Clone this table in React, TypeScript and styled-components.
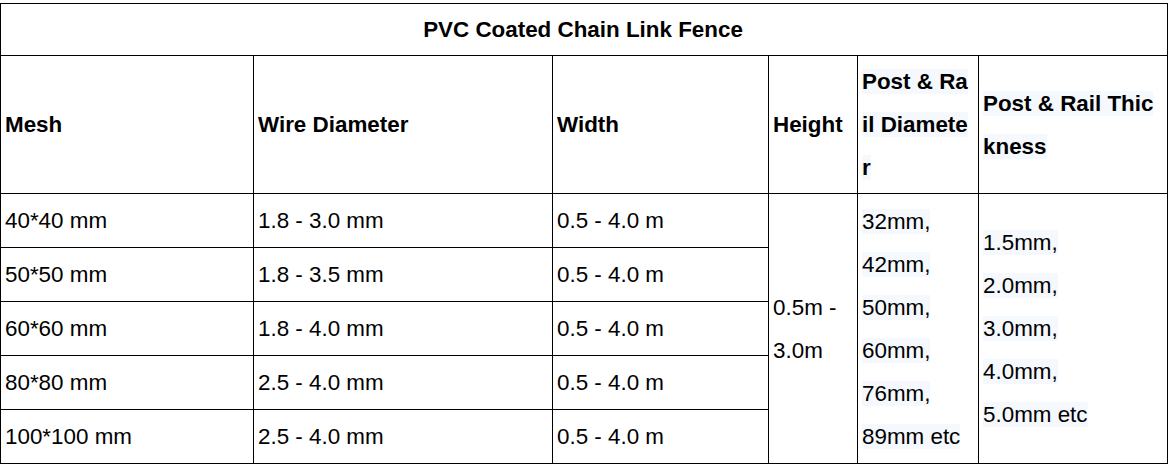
import React from 'react';
import styled, { createGlobalStyle } from 'styled-components';

const GlobalStyle = createGlobalStyle`
  body {
    margin: 0;
    background: #ffffff;
    font-family: "Liberation Sans", Arial, sans-serif;
    color: #000000;
  }
`;

const Table = styled.table`
  margin-top: 3px;
  width: 1167px;
  border-collapse: collapse;
  table-layout: fixed;
  font-size: 22.4px;
  line-height: 43px;
`;

const BodyRow = styled.tr`
  height: 54px;
`;

const Cell = styled.td<{ $center?: boolean; $breakAll?: boolean }>`
  border: 1px solid #000000;
  padding: 4px 6px 4px 4px;
  vertical-align: middle;
  text-align: ${(p) => (p.$center ? 'center' : 'left')};
  word-break: ${(p) => (p.$breakAll ? 'break-all' : 'normal')};
  font-weight: normal;
`;

const HeadCell = styled(Cell).attrs({ as: 'th' })`
  font-weight: bold;
`;

const Mark = styled.span`
  background: #f5f8fc;
`;

const Lines = ({ items }: { items: string[] }) => (
  <>
    {items.map((t, i) => (
      <React.Fragment key={t}>
        {i > 0 && <br />}
        <Mark>{t}</Mark>
      </React.Fragment>
    ))}
  </>
);

const rows = [
  ['40*40 mm', '1.8 - 3.0 mm', '0.5 - 4.0 m'],
  ['50*50 mm', '1.8 - 3.5 mm', '0.5 - 4.0 m'],
  ['60*60 mm', '1.8 - 4.0 mm', '0.5 - 4.0 m'],
  ['80*80 mm', '2.5 - 4.0 mm', '0.5 - 4.0 m'],
  ['100*100 mm', '2.5 - 4.0 mm', '0.5 - 4.0 m'],
];

const diameters = ['32mm,', '42mm,', '50mm,', '60mm,', '76mm,', '89mm etc'];
const thickness = ['1.5mm,', '2.0mm,', '3.0mm,', '4.0mm,', '5.0mm etc'];

export default function App() {
  return (
    <>
      <GlobalStyle />
      <Table>
        <colgroup>
          <col style={{ width: 253 }} />
          <col style={{ width: 299 }} />
          <col style={{ width: 216 }} />
          <col style={{ width: 89 }} />
          <col style={{ width: 121 }} />
          <col style={{ width: 189 }} />
        </colgroup>
        <tbody>
          <tr>
            <HeadCell colSpan={6} $center>
              PVC Coated Chain Link Fence
            </HeadCell>
          </tr>
          <tr>
            <HeadCell>Mesh</HeadCell>
            <HeadCell>Wire Diameter</HeadCell>
            <HeadCell>Width</HeadCell>
            <HeadCell>Height</HeadCell>
            <HeadCell $breakAll>
              <Mark>Post &amp; Rail Diameter</Mark>
            </HeadCell>
            <HeadCell $breakAll>
              <Mark>Post &amp; Rail Thickness</Mark>
            </HeadCell>
          </tr>
          {rows.map((r, i) => (
            <BodyRow key={r[0]}>
              <Cell>{r[0]}</Cell>
              <Cell>{r[1]}</Cell>
              <Cell>{r[2]}</Cell>
              {i === 0 && (
                <>
                  <Cell rowSpan={5}>0.5m - 3.0m</Cell>
                  <Cell rowSpan={5}>
                    <Lines items={diameters} />
                  </Cell>
                  <Cell rowSpan={5}>
                    <Lines items={thickness} />
                  </Cell>
                </>
              )}
            </BodyRow>
          ))}
        </tbody>
      </Table>
    </>
  );
}
